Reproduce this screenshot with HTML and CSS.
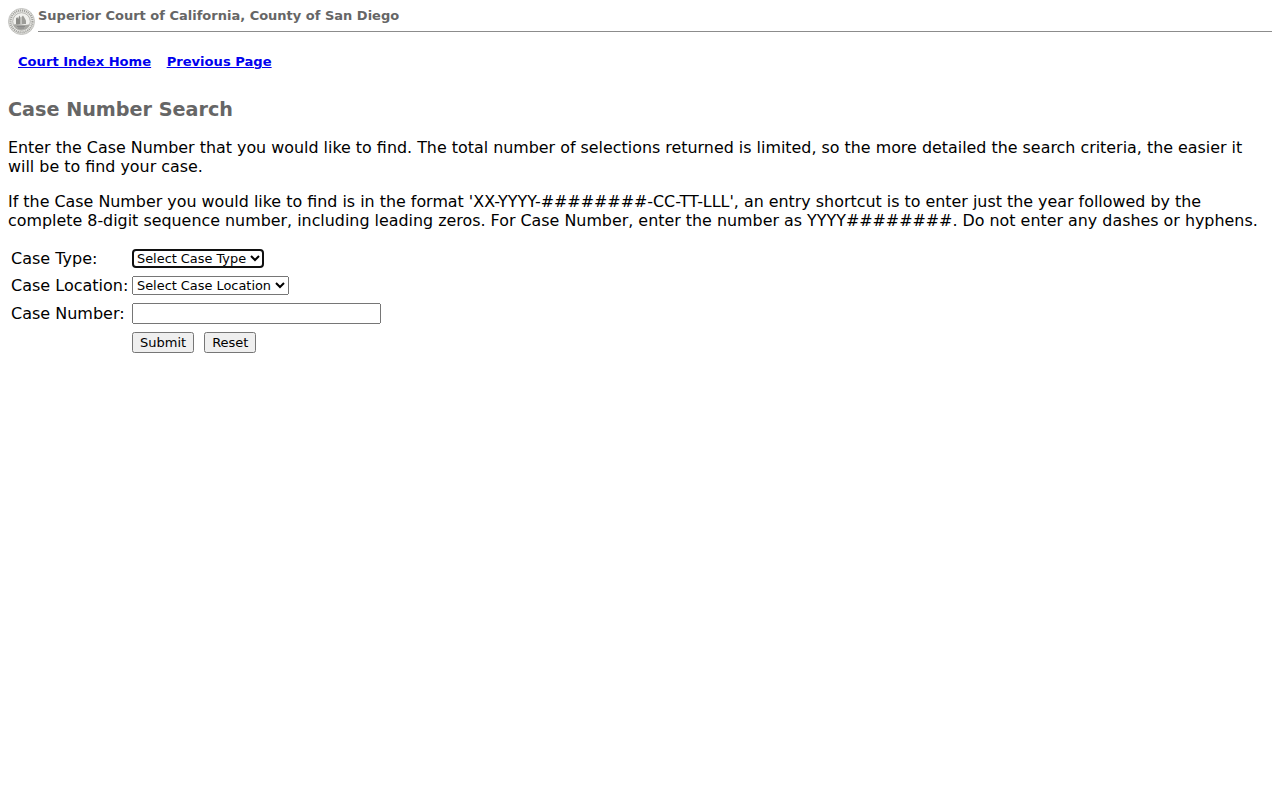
FILE: index.html
```html
<!DOCTYPE html>
<html lang="en">
<head>
  <meta charset="UTF-8" />
  <title>Case Number Search</title>
  <link rel="stylesheet" href="styles.css">
</head>
<body>
  <header class="banner">
    <svg class="seal" viewBox="0 0 27 27" width="27" height="27" aria-hidden="true">
      <circle cx="13.500" cy="13.500" r="13" fill="#ecece9" stroke="#b4b4b0" stroke-width="0.8"/>
      <circle cx="13.500" cy="13.500" r="11" fill="none" stroke="#a2a29e" stroke-width="2.200" stroke-dasharray="1.200 0.800"/>
      <circle cx="13.500" cy="13.500" r="8.800" fill="#f0f0ed" stroke="#8e8e8a" stroke-width="0.600"/>
      <path d="M5.500 16.500c2.500-.8 5.500-.6 8 0s5 .5 8-.2c-.3 3-3.500 5.700-8 5.700s-7.500-2.500-8-5.500z" fill="#a6a6a2"/>
      <path d="M8 16V10.500l1.200-1.500 1 2 1-3.500 1.300 2v6.500z" fill="#8a8a86"/>
      <path d="M13.500 16V9l1.500-1.500 1 1.500 2 3.500v3.500z" fill="#9c9c98"/>
      <path d="M9 18.500h8M10 20h6" stroke="#77777a" stroke-width="0.600"/>
    </svg>
    <div class="banner-title">Superior Court of California, County of San Diego</div>
  </header>

  <nav class="links">
    <a href="#">Court Index Home</a>
    <a href="#">Previous Page</a>
  </nav>

  <h1>Case Number Search</h1>

  <p>Enter the Case Number that you would like to find. The total number of selections returned is limited, so the more detailed the search criteria, the easier it will be to find your case.</p>
  <p>If the Case Number you would like to find is in the format 'XX-YYYY-########-CC-TT-LLL', an entry shortcut is to enter just the year followed by the complete 8-digit sequence number, including leading zeros. For Case Number, enter the number as YYYY########. Do not enter any dashes or hyphens.</p>

  <form class="search">
    <label for="type">Case Type:</label>
    <div><select id="type" autofocus><option>Select Case Type</option></select></div>
    <label for="location">Case Location:</label>
    <div><select id="location"><option>Select Case Location</option></select></div>
    <label for="number">Case Number:</label>
    <div><input id="number" type="text"></div>
    <div class="actions">
      <input type="submit" value="Submit">
      <input type="reset" value="Reset">
    </div>
  </form>
</body>
</html>
```

FILE: styles.css
```css
body {
  margin: 8px;
  background: #fff;
  color: #000;
  font-family: "DejaVu Sans", sans-serif;
  font-size: 15.9px;
}

/* Banner */
.banner {
  display: flex;
  align-items: flex-start;
  gap: 3px;
}
.seal {
  flex: none;
}
.banner-title {
  flex: 1;
  height: 23px;
  border-bottom: 1px solid #8c8c8c;
  color: #666;
  font-size: 13px;
  font-weight: bold;
  line-height: 15px;
}

/* Links */
.links {
  display: flex;
  gap: 15.5px;
  margin: 19px 0 0 10px;
  font-size: 13.1px;
  font-weight: bold;
}

h1 {
  margin: 29px 0 17px;
  color: #666;
  font-size: 19.2px;
}

p {
  margin: 16px 0;
}

/* Form */
.search {
  display: grid;
  grid-template-columns: 121px 1fr;
  align-items: center;
  row-gap: 8px;
  margin: 19px 0 0 3px;
}
.search label {
  font-size: 16px;
}
.search select,
.search input {
  font-family: "DejaVu Sans", sans-serif;
  font-size: 13px;
}
.search select {
  display: block;
  font-size: 12.9px;
}
#number {
  display: block;
  box-sizing: border-box;
  width: 249px;
  height: 21px;
}
.actions {
  display: flex;
  gap: 10px;
  grid-column: 2;
}
```
